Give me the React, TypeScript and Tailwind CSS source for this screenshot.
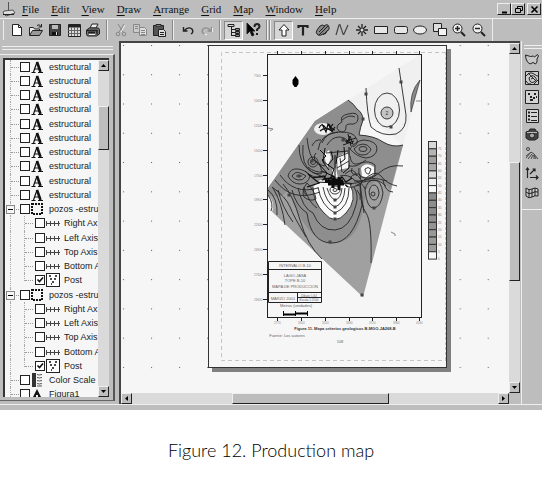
import React from 'react';

type TreeKind = 'text' | 'group' | 'axis' | 'post' | 'scale' | 'figure';

interface TreeRow {
    kind: TreeKind;
    label: string;
    child?: boolean;
    checked?: boolean;
}

const axisRows: TreeRow[] = [
    { kind: 'axis', label: 'Right Ax', child: true },
    { kind: 'axis', label: 'Left Axis', child: true },
    { kind: 'axis', label: 'Top Axis', child: true },
    { kind: 'axis', label: 'Bottom A', child: true },
    { kind: 'post', label: 'Post', child: true, checked: true },
];

const treeRows: TreeRow[] = [
    ...Array.from({ length: 10 }, (): TreeRow => ({ kind: 'text', label: 'estructural' })),
    { kind: 'group', label: 'pozos -estru' },
    ...axisRows,
    { kind: 'group', label: 'pozos -estru' },
    ...axisRows,
    { kind: 'scale', label: 'Color Scale' },
    { kind: 'figure', label: 'Figura1' },
];

const menus = ['File', 'Edit', 'View', 'Draw', 'Arrange', 'Grid', 'Map', 'Window', 'Help'];

const Icon: React.FC<{ children: React.ReactNode; color?: string }> = ({ children, color = '#222' }) => (
    <svg className="w-4 h-4 shrink-0" viewBox="0 0 16 16" fill="none" stroke={color} strokeWidth="1">
        {children}
    </svg>
);

const fileTools = [
    { name: 'New', icon: <Icon><path d="M3.5 2.5h6l3 3v8h-9z" fill="#fff" /><path d="M9.5 2.5v3h3" /></Icon> },
    { name: 'Open', icon: <Icon><path d="M1.5 13V5.500h4l1 1.500h5v2" fill="#eee" /><path d="M1.500 13.500l3-5h10l-3 5z" fill="#999" /><path d="M9 3.500q2-2 4 1M13.500 2v3h-3" /></Icon> },
    { name: 'Save', icon: <Icon><path d="M2.500 2.500h11v11h-11z" fill="#444" /><path d="M5 3h6v4H5z" fill="#bbb" stroke="none" /><path d="M5 10h6v3H5z" fill="#111" stroke="none" /><path d="M9.500 10v3" stroke="#ddd" /></Icon> },
    { name: 'Worksheet', icon: <Icon><path d="M2.500 2.500h12v12h-12z" fill="#ddd" /><path d="M3 4h11" strokeWidth="3" /><path d="M2 8.500h12M2 11.500h12M5.500 5v9M8.500 5v9M11.500 5v9" stroke="#666" /></Icon> },
    { name: 'Print', icon: <Icon><path d="M5 6l2-4h6l-2 4z" fill="#eee" /><path d="M1.500 8l3-2h9l1 2v4l-3 2h-9l-1-2z" fill="#777" /><path d="M2 8.500h10v4M3 10.500h7" strokeWidth="1.500" /><path d="M4 12.500h6" stroke="#eee" /></Icon> },
];

const editTools = [
    { name: 'Cut', icon: <Icon color="#888"><path d="M5 2l5 8M11 2L6 10" /><circle cx="5" cy="12" r="1.800" /><circle cx="11" cy="12" r="1.800" /><path d="M12 3L8 10" stroke="#eee" /></Icon> },
    { name: 'Copy', icon: <Icon color="#888"><path d="M1.500 2.500h6v8h-6zM3 4.500h3M3 6.500h3" fill="#ccc" /><path d="M7.500 5.500h5l2 2v6h-7z" fill="#ddd" /><path d="M9 8.500h4M9 10.500h4M9 12.500h4" /></Icon> },
    { name: 'Paste', icon: <Icon><path d="M2.500 3.500h10v10h-10z" fill="#555" /><path d="M5 4V2.500h5V4z" fill="#ddd" /><path d="M7.500 7.500h5l2 2v5h-7z" fill="#ddd" /><path d="M9 10.500h4M9 12.500h4" /></Icon> },
];

const undoTools = [
    { name: 'Undo', icon: <Icon><path d="M3.500 5v4h4M4 9q4-5 8-2q2 3-1 5" strokeWidth="1.400" /></Icon> },
    { name: 'Redo', icon: <Icon color="#8f8f8f"><path d="M12.500 5v4h-4M12 9q-4-5-8-2q-2 3 1 5" strokeWidth="1.400" /><path d="M6 12.500h2M13.500 6v4" stroke="#eee" /></Icon> },
];

const drawTools = [
    { name: 'Select', icon: <Icon><path d="M8 2.500l5 5.500h-3v6H6V8H3z" fill="#fff" /></Icon> },
    { name: 'Text', icon: <Icon><path d="M3.500 6V4h9v2M8 4v9.500" strokeWidth="2.200" /></Icon> },
    { name: 'Polygon', icon: <Icon><path d="M5 4q3-2 4 0q4-3 5 1q1 3-2 4q-1 4-4 3q-2 2-5 1q-3-2-1-5z" fill="#888" /><path d="M4 10l6-6M4 13L13 4M8 13l5-5" /></Icon> },
    { name: 'Polyline', icon: <Icon color="#444"><path d="M2 13L5 3q1-1 1 0l3 9q1 1 1 0l4-9" strokeWidth="1.200" /></Icon> },
    { name: 'Symbol', icon: <Icon><path d="M8 2v12M2 8h12M4 4l8 8M12 4l-8 8" strokeWidth="1.300" /><circle cx="8" cy="8" r="1.500" fill="#ddd" stroke="none" /></Icon> },
    { name: 'Rectangle', icon: <Icon><path d="M1.500 4.500h13v7h-13z" fill="#e6e6e6" /></Icon> },
    { name: 'Rounded rectangle', icon: <Icon><rect x="1.500" y="4.500" width="13" height="7" rx="2" fill="#e6e6e6" /></Icon> },
    { name: 'Ellipse', icon: <Icon><ellipse cx="8" cy="8" rx="6.500" ry="4" fill="#eee" /></Icon> },
    { name: 'Overlap', icon: <Icon><path d="M1.500 1.500h8v8h-8z" fill="#ddd" /><path d="M6.500 6.500h8v7h-8z" fill="#f4f4f4" /></Icon> },
    { name: 'Zoom in', icon: <Icon><circle cx="6.500" cy="6.500" r="4.500" fill="#eee" /><path d="M4 6.500h5M6.500 4v5" strokeWidth="1.500" /><path d="M10 10l4 4" strokeWidth="2" /></Icon> },
    { name: 'Zoom out', icon: <Icon><circle cx="6.500" cy="6.500" r="4.500" fill="#eee" /><path d="M4 6.500h5" strokeWidth="1.500" /><path d="M10 10l4 4" strokeWidth="2" /></Icon> },
];

const mapTools = [
    { name: 'Base map', icon: <Icon><path d="M1.500 4l5 1.500 3-.5 1 1 3-2.500 1 1.500-1.500 3v3l-1.500 2-2.500-1.500-3 1.500-2.500-2q-2-3-2-7z" fill="#c8c8c8" /></Icon> },
    { name: 'Contour map', icon: <Icon><path d="M1.500 1.500h13v13h-13z" fill="#ccc" /><path d="M2 6q4-5 8-2t4 2M2 11q2 4 5 3M5 8q3-4 6-1t-1 5-5-4zM7 9l2-1M10 14l4-4M4 3l9 9" /></Icon> },
    { name: 'Post map', icon: <Icon><path d="M1.500 1.500h13v13h-13z" fill="#d4d4d4" /><path d="M4 5h2M10 5h2M6 8h2M9 9h2M6 11h3M12 8h1" strokeWidth="1.800" /></Icon> },
    { name: 'Legend', icon: <Icon><path d="M2.500 1.500h12v13h-12z" fill="#d4d4d4" /><path d="M4 4.500h2M4 8h2M4 11.500h2" strokeWidth="2" /><path d="M7 4.500h6M7 8.500h6M7 12.500h6" /></Icon> },
    { name: 'Image map', icon: <Icon><path d="M2 5l3-1 1-2h5l1 2 2 1v6l-3 2H5l-3-2z" fill="#444" /><circle cx="8" cy="8.500" r="2.500" fill="#aaa" /><path d="M3 5.500h10" stroke="#bbb" /></Icon> },
    { name: 'Shaded relief', icon: <Icon color="#444"><circle cx="4" cy="3" r="1.500" /><path d="M2 12l5-6 3 2 4 5M4 13l4-5M7 13l2-4M10 13V9M12 13l-2-4M2 10l4-3" /></Icon> },
    { name: 'Vector map', icon: <Icon><path d="M3.500 13V3M2 5l1.500-2L5 5M6 9l5-5M8.500 4H11v2.500M6 12.500h8M12 10.500l2 2-2 2" strokeWidth="1.200" /></Icon> },
    { name: 'Wireframe', icon: <Icon><path d="M2 4q3 3 6 1t6 0v7q-3-1-6 1t-6-1zM2 8q3 3 6 1t6-1M5 5v8M8 5v8M11 4v8" fill="#ccc" /></Icon> },
];

const ToolButton: React.FC<{ name: string; pressed?: boolean; children: React.ReactNode }> = ({ name, pressed, children }) => (
    <button
        aria-label={name}
        title={name}
        className={`flex items-center justify-center shrink-0 w-[19px] h-[19px] ${pressed ? 'bg-[#d6d6d6] border-l border-t border-[#888] border-r border-b border-r-white border-b-white' : ''}`}
    >
        {children}
    </button>
);

const Separator = () => <span className="w-0.5 h-5 shrink-0 border-l border-[#888] border-r border-r-[#eee]" />;

const Arrow: React.FC<{ dir: 'up' | 'down' | 'left' | 'right' }> = ({ dir }) => {
    const paths = {
        up: 'M1 5h5L3.500 2z',
        down: 'M1 2h5L3.500 5z',
        left: 'M5 1v5L2 3.500z',
        right: 'M2 1v5l3-2.500z',
    };
    return (
        <button aria-label={`Scroll ${dir}`} className="flex items-center justify-center w-[11px] h-[11px] shrink-0 bg-[#bdbdbd] border border-t-[#eee] border-l-[#eee] border-r-[#222] border-b-[#222]">
            <svg className="w-[7px] h-[7px]" viewBox="0 0 7 7"><path d={paths[dir]} fill="#000" /></svg>
        </button>
    );
};

const RowIcon: React.FC<{ kind: TreeKind }> = ({ kind }) => {
    switch (kind) {
        case 'text':
            // serif capital drawn as the text-object glyph
            return (
                <svg className="w-[14px] h-[14px]" viewBox="0 0 14 14" fill="none" stroke="#111">
                    <path d="M7 2L3.500 12M4.500 9h5" strokeWidth="1.200" />
                    <path d="M7 2l3.500 10" strokeWidth="2.600" />
                    <path d="M1.500 12.500h4M8 12.500h5" />
                </svg>
            );
        case 'figure':
            return <svg className="w-[14px] h-[14px]" viewBox="0 0 14 14"><path d="M7 2l4 8-2 2H5l-2-2z" fill="#111" /><path d="M6 8h2v3H6z" fill="#eee" /></svg>;
        case 'group':
            return <svg className="w-[14px] h-[14px]" viewBox="0 0 14 14"><rect x="2" y="2" width="10" height="10" fill="none" stroke="#111" strokeWidth="2" strokeDasharray="2 1" /></svg>;
        case 'axis':
            return <svg className="w-[16px] h-[14px]" viewBox="0 0 16 14"><path d="M1 7.500h14M1.500 5v5M5.500 5v5M9.500 5v5M13.500 5v5" fill="none" stroke="#444" /></svg>;
        case 'post':
            return (
                <svg className="w-[16px] h-[14px]" viewBox="0 0 16 14">
                    <rect x="1.500" y="0.500" width="13" height="13" fill="#fff" stroke="#222" />
                    <path d="M4 3h2M10 3h2M5 6h2M9 6h2M7 9h2M6 11h1" stroke="#111" strokeWidth="1.500" />
                </svg>
            );
        case 'scale':
            return (
                <svg className="w-[14px] h-[14px]" viewBox="0 0 14 14">
                    <rect x="2" width="4" height="14" fill="#333" />
                    <path d="M7 1.500q2 1 5 0M7 4.500q2 1 5 0M7 7.500q2 1 5 0M7 10.500q2 1 5 0M7 13h5" fill="none" stroke="#555" />
                </svg>
            );
    }
};

const TreeItem: React.FC<{ row: TreeRow }> = ({ row }) => (
    <li className="flex items-start w-full h-[14px] nth-[4n]:h-[15px] last:h-[10px]! last:overflow-hidden shrink-0">
        <span className="relative w-[15px] self-stretch shrink-0">
            <span className="absolute left-[5px] top-0 h-full border-l border-dotted border-[#aaa]" />
            {!row.child && <span className="absolute left-[6px] top-[7px] w-2 border-t border-dotted border-[#999]" />}
            {row.kind === 'group' && (
                <button aria-label="Collapse" className="absolute left-[1px] top-[3px] w-[9px] h-[9px] flex items-center justify-center border border-[#888] bg-[#f6f6f6]">
                    <span className="w-[5px] h-px bg-black" />
                </button>
            )}
        </span>
        {row.child && (
            <span className="relative w-[15px] self-stretch shrink-0">
                <span className={`absolute left-[4px] top-0 border-l border-dotted border-[#aaa] ${row.kind === 'post' ? 'h-2' : 'h-full'}`} />
                <span className="absolute left-[5px] top-[7px] w-2 border-t border-dotted border-[#999]" />
            </span>
        )}
        <label className="flex items-center h-[14px]">
            <span className="relative w-[10px] h-[10px] shrink-0">
                <input type="checkbox" defaultChecked={row.checked} className="peer block appearance-none w-[10px] h-[10px] bg-white border border-[#222]" />
                <svg className="absolute inset-0 hidden peer-checked:block pointer-events-none" viewBox="0 0 10 10"><path d="M2.500 4.500l2 2 3.500-4" fill="none" stroke="#111" strokeWidth="1.600" /></svg>
            </span>
            <RowIcon kind={row.kind} />
            <span className={`whitespace-nowrap ${row.child ? 'ml-[3px]' : 'ml-[5px]'}`}>{row.label}</span>
        </label>
    </li>
);

const scaleColors = ['#d8d8d8', '#b4b4b4', '#a0a0a0', '#a8a8a8', '#d8d8d8', '#eee', '#f6f6f6', '#8c8c8c', '#8c8c8c', '#8c8c8c', '#909090', '#949494', '#989898', '#9c9c9c', '#9c9c9c', '#f6f6f6'];
const frameX = [277, 301, 325, 349, 372, 396, 419];
const frameY = [75, 100, 125, 150, 175, 199, 224, 249, 274, 299];
const markers = [[366, 94], [401, 82], [391, 127], [363, 119], [335, 200], [335, 207], [335, 213], [335, 219], [330, 242], [289, 195], [361, 198], [374, 208], [343, 140], [299, 176], [362, 295], [312, 161]];

// Contour map sheet: filled levels first, then isolines, well markers and annotation
const MapSheet = () => (
    <svg className="block w-full h-auto" viewBox="209 46 237 321" role="img" aria-label="Production contour map" fontFamily="'Liberation Sans', sans-serif">
        <path d="M446 52.500H221.500V360.500H446" fill="none" stroke="#c4c4c4" strokeDasharray="4 3" />
        <path d="M445.500 52v308" stroke="#c4c4c4" strokeDasharray="3 2" />
        <path d="M348 100L421 54V80L403 145Z" fill="#f0f0f0" />
        <path d="M268 188L315 121L348 100Q354 104 357 109Q363 113 363 120Q360 128 359 135Q375 136 383 142Q393 148 403 145L363 297L268 208Z" fill="#a0a0a0" />
        <path d="M268 188L315 121L348 100Q354 104 357 109Q363 113 363 120Q360 128 359 135Q375 136 383 142Q393 148 403 145L390 190Q380 172 366 190C362 230 352 243 332 243C312 243 297 215 288 190Q280 200 268 195Z" fill="#8e8e8e" />
        <path d="M420 80Q409 92 411 112Z" fill="#8b8b8b" stroke="#222" strokeWidth="0.600" />
        <path d="M268 195q8 8 4 17l-4-4z" fill="#f6f6f6" />
        <path d="M313 187L320 180L350 184Q358 200 346 213Q335 226 324 213Q313 200 313 187Z" fill="#fafafa" />
        <ellipse cx="323" cy="129" rx="9" ry="6" fill="#eee" />
        <path d="M361 168q5-7 13-1v7q-6 5-12 2z" fill="#fafafa" />
        <path d="M324 154l5-4 2 8-4 10zM337 157l10-5 3 6-2 10-10 2zM332 170l4-2 2 10-5-2z" fill="#f4f4f4" />
        <circle cx="387" cy="113" r="6" fill="#c4c4c4" />

        <g fill="none" stroke="#262626" strokeWidth="0.900">
            <path d="M366 88Q367 115 371 127Q382 137 396 134Q407 129 406 115L399 68" />
            <ellipse cx="387" cy="110" rx="12.500" ry="17" />
            <circle cx="387" cy="113" r="6" />
            <path d="M348 100Q354 104 357 109Q363 113 363 120Q360 128 359 135Q375 136 383 142Q393 148 403 145" />
            <path d="M339 131q-5-5 3-9q-3-6 6-8q11-3 10 5q-1 6-8 5q-5 0-4 4q-1 6-7 3zM342 120q7-6 13-3" />
            <path d="M322 143q4-11 18-11t16 6q4 5-3 9M327 145q5-8 12-8t10 6M318 150q2-16 20-18" />
            <path d="M350 149q5-8 14-9q13 1 13 9q-1 8-11 9q-9-1-16-9zM354 149q4-5 9-5t8 5q-2 6-8 6t-9-6z" />
            <ellipse cx="363" cy="149" rx="4" ry="2.500" />
            <path d="M307 138q2 20 9 24t5 12q-8 0-12-4q-10-7-10-25M303 145q-2 20 9 27q10 4 15 8" />
            <circle cx="313" cy="162" r="5" /><circle cx="313" cy="162" r="2.500" />
            <path d="M288 176q2-8 10-7t12 7q-2 8-10 8t-12-8zM292 176q3-5 8-3t6 3q-3 5-8 4t-6-4zM296 176h6" />
            <path d="M280 175Q294 195 318 188M275 180Q292 203 320 192M272 187Q286 197 290 207T306 237M283 184Q293 195 300 220T322 259M278 190Q282 207 293 222" />
            <path d="M268 190q10 8 9 25M268 195q6 9 3 16M273 188Q282 203 285 225M292 190Q296 206 307 213Q311 243 332 243T362 205Q362 195 360 183" />
            <path d="M298 188Q303 209 313 213Q320 231 335 230T356 205Q359 195 354 187M304 188q6 16 13 20" />
            <path d="M313 187Q313 202 324 213Q335 226 346 213Q358 200 350 184M318 187q3 19 17 26q14-6 14-25M323 187q3 16 12 20q9-3 10-19M327 188q3 10 8 12q6-1 7-12" />
            <ellipse cx="335" cy="190" rx="5" ry="4" /><ellipse cx="335" cy="190" rx="2" ry="1.500" />
            <path d="M307 183q-6 8-3 14q6 5 12 2q-1-8-9-16zM304 187q-1 7 3 8" />
            <path d="M365 190q2-10 9-10t9 13q-2 14-9 15t-9-18zM369 192q1-7 5-7t5 8q-1 7-5 7t-5-8z" />
            <circle cx="373" cy="194" r="2" />
            <path d="M360 183Q360 205 366 213T371 263M357 190q6 9 7 23M403 166q-14-2-24 7t-25 8M397 186q-10-2-16-10t-19 6M393 192q-8 0-10-12M349 166q8 1 12-3q8-3 14 2v10q-7 5-13 2q-4 0-3-9M365 169q3-3 6 0l-2 5q-4 0-4-5M350 178q5-7 10 0t-4 8" />
            <path d="M340 176q8-2 13 3t15 2 18 5M342 181q10 5 20 0t25 0M345 174q9-8 12 2" />
            <path d="M308 167q7 6 16 5M305 171q8 8 18 6M316 153q-4 5 1 9t8 4M350 156q1 9 7 8t9-4M352 168q-2 7 4 6t4 5M312 146q3-7 9-6M346 186q6 3 11-1t8 4" />
        </g>

        <g fill="none" stroke="#0c0c0c" strokeWidth="1.200">
            <path d="M319 128q3-6 6-1t8-3M322 124l4 8 2-8 4 7 3-4M320 131q6-5 13 1M329 124q3 6 6 6" />
            <path d="M343 138l4 5 3-7 3 8-7-3 10-3M348 134l3 12M343 145l11-4" strokeWidth="0.900" />
            <path d="M320 150l6 6-4 4 7 6M325 148l-2 14 6 8M331 151l2 8-5 6 6 4-3 8M335 155v25M338 150l-2 14M344 147l1 12-5 4M349 147v21l-6 5M319 164l8 9-3 6M322 171l13 6" strokeWidth="1" />
            <path d="M336 158l12-5M326 153l22-2M337 168l12-7M340 158l2 14" strokeWidth="0.800" />
            <path d="M312 178l12-2 3 5 6-5 4 7 5-6 4 5 6-4M318 182l34 2M322 180q12-6 26 7M308 174l11 9-12 4" />
            <path d="M325 181h18M328 184h16M333 178v10M339 177v13" strokeWidth="3" />
        </g>

        {markers.map(([x, y]) => (
            <rect key={`${x}-${y}`} x={x - 1.5} y={y - 1.5} width="3" height="3" fill="#444" />
        ))}
        <text x="385.500" y="115" fontSize="5" fill="#333">2</text>
        <path d="M295.500 76l3 4v4l-2 3h-2l-2-3v-4z" fill="#000" />

        <rect x="267.500" y="54.500" width="154" height="263" fill="none" stroke="#222" />
        {frameX.map((x) => (
            <g key={x}>
                <path d={`M${x + 0.5} 51v3M${x + 0.5} 318v3`} stroke="#222" />
                <text x={x - 3} y="324" fontSize="3" fill="#888">{x * 10}</text>
            </g>
        ))}
        {frameY.map((y) => (
            <g key={y}>
                <path d={`M263 ${y + 0.5}h4`} stroke="#222" />
                <text x="254" y={y + 1.5} fontSize="3" fill="#888">{y * 100}</text>
            </g>
        ))}
        <path d="M268 128l5 1-3 2M391 232l4 2v2M416 101h5" fill="none" stroke="#888" />

        <path d="M268.500 261.500h53v41h-53zM268 269.500h53M268 292.500h53M297.500 292v10M297 297.500h24" fill="#f6f6f6" stroke="#222" />
        <g fill="#666" textAnchor="middle">
            <text x="295" y="267" fontSize="4">INTERVALO B-10</text>
            <text x="295" y="277" fontSize="4">LAGO-JASA</text>
            <text x="295" y="282" fontSize="4">TOPE B-10</text>
            <text x="295" y="287.500" fontSize="4">MAPA DE PRODUCCION</text>
            <text x="283" y="299.500" fontSize="4">MARZO 2001</text>
            <text x="309" y="296.500" fontSize="3">Dibujo: LGJ</text>
            <text x="309" y="301" fontSize="3">Escala 1:2500</text>
            <text x="296" y="307" fontSize="4">Metros (unidades)</text>
            <text x="345" y="329.500" fontSize="4" fontWeight="bold" fill="#333">Figura 11. Mapa criterios geologicos B-MGO-JA268-B</text>
            <text x="287" y="336.500" fontSize="4">Fuente: Los autores</text>
            <text x="340" y="342.500" fontSize="4">108</text>
        </g>
        <path d="M283 314.500h12M295 313.500h13" stroke="#000" strokeWidth="2" />
        <path d="M283.500 311v5M295.500 311v5M307.500 311v5" stroke="#000" />

        {scaleColors.map((color, i) => (
            <g key={i}>
                <rect x="428.500" y={141.5 + i * 7.35} width="8" height="7.350" fill={color} stroke="#333" />
                <text x="438" y={150 + i * 7.35} fontSize="3" fill="#777">{75 - i * 5}</text>
            </g>
        ))}
    </svg>
);

const MenuBar = () => (
    <header className="flex items-center h-[18px] pl-0.5 pr-px">
        <svg className="w-[14px] h-[16px] mr-[6px]" viewBox="0 0 14 16" fill="none" stroke="#555">
            <path d="M6.500 1v9M2 10l9-1 2 3-9 3-3-3z" fill="#ddd" />
            <path d="M1 13.500h11" stroke="#222" />
        </svg>
        <nav className="flex gap-3 font-['Liberation_Serif',serif] text-[11px] leading-4 text-[#111] [text-shadow:0_0_1px_#555]">
            {menus.map((menu) => (
                <button key={menu}><span className="underline underline-offset-2">{menu[0]}</span>{menu.slice(1)}</button>
            ))}
        </nav>
        <div className="ml-auto flex">
            {[
                { name: 'Minimize', d: 'M3 8.500h5', w: 2 },
                { name: 'Restore', d: 'M4.500 4V2.500h5v4H8M2.500 4.500h5v4h-5z', w: 1 },
                { name: 'Close', d: 'M2.500 2.500l6 6M8.500 2.500l-6 6', w: 1.6 },
            ].map((b) => (
                <button key={b.name} aria-label={b.name} className={`w-[14px] h-[12px] flex items-center justify-center border border-t-[#eee] border-l-[#eee] border-r-[#222] border-b-[#222] ${b.name === 'Close' ? 'ml-[2px]' : ''}`}>
                    <svg className="w-[11px] h-[11px]" viewBox="0 0 11 11"><path d={b.d} fill="none" stroke="#000" strokeWidth={b.w} /></svg>
                </button>
            ))}
        </div>
    </header>
);

const Toolbar = () => (
    <div className="flex items-center h-[23px] border-t border-[#eee]">
        <span className="w-px h-5 ml-[3px] mr-[3px] bg-[#eee]" />
        {fileTools.map((t) => <ToolButton key={t.name} name={t.name}>{t.icon}</ToolButton>)}
        <span className="flex pl-1 pr-[3px]"><Separator /></span>
        {editTools.map((t) => <ToolButton key={t.name} name={t.name}>{t.icon}</ToolButton>)}
        <span className="flex px-1"><Separator /></span>
        {undoTools.map((t) => <ToolButton key={t.name} name={t.name}>{t.icon}</ToolButton>)}
        <span className="flex px-[3px]"><Separator /></span>
        <ToolButton name="Object manager" pressed>
            <Icon><path d="M2 2.500h6v2H2zM5.500 5v9M5.500 7.500H9M5.500 10.500H9M5.500 13.500H9" /><path d="M9.500 6.500h4v2h-4zM9.500 9.500h4v2h-4zM9.500 12.500h4v2h-4z" fill="#888" /></Icon>
        </ToolButton>
        <ToolButton name="Context help">
            <Icon><path d="M2 1v11l3-3 2 5 2-1-2-4h3z" fill="#000" /><path d="M9.500 5q0-3 2.500-3t2.500 2.500q0 1.500-2.500 3V9M12 11v2" strokeWidth="2" /></Icon>
        </ToolButton>
        <span className="flex gap-px pl-1 pr-[3px]"><Separator /><Separator /></span>
        <div className="flex justify-between w-[214px]">
            {drawTools.map((t, i) => <ToolButton key={t.name} name={t.name} pressed={i === 0}>{t.icon}</ToolButton>)}
        </div>
        <span className="w-px h-full ml-1 bg-[#eee]" />
    </div>
);

const ObjectManager = () => (
    <aside className="flex flex-col w-[119px] shrink-0 pt-[5px] pb-[3px] pr-[4px]">
        <div className="h-1 mx-0.5 border-y border-[#eee]" />
        <div className="flex flex-1 min-h-0 mt-1 pt-[3px] pb-[3px] pl-[3px] pr-[4px] border-t border-[#eee] border-r-2 border-r-[#555] border-b border-b-[#666]">
            <div className="flex flex-1 min-w-0 border-t-2 border-l-2 border-[#333] bg-[#f6f6f6]">
                <ul className="flex flex-col flex-1 min-w-0 font-['Liberation_Sans',sans-serif] text-[9px] leading-[14px] text-[#222]">
                    {treeRows.map((row, i) => <TreeItem key={i} row={row} />)}
                </ul>
                <div className="flex flex-col w-[11px] shrink-0 bg-[#dadada]">
                    <Arrow dir="up" />
                    <div className="flex-[35]" />
                    <div className="flex-[43] bg-[#bdbdbd] border border-t-[#eee] border-l-[#eee] border-r-[#222] border-b-[#222]" />
                    <div className="flex-[238]" />
                    <Arrow dir="down" />
                </div>
            </div>
        </div>
    </aside>
);

const PlotWindow = () => (
    <main className="flex flex-col flex-1 min-w-0 border-t-2 border-l-2 border-[#444]">
        <div className="flex flex-1 min-h-0">
            <div className="relative flex-1 min-w-0 pt-0.5 pb-6 pl-[87px] bg-[#f6f6f6] overflow-hidden">
                <svg className="absolute inset-0 w-full h-full" aria-hidden="true">
                    <defs>
                        <pattern id="grid" width="28.060" height="29.270" patternUnits="userSpaceOnUse">
                            <rect x="2" y="2" width="1" height="1" fill="#555" />
                        </pattern>
                    </defs>
                    <rect width="100%" height="100%" fill="url(#grid)" />
                </svg>
                <div className="relative w-[239px] bg-[#f6f6f6] border border-[#333] shadow-[4px_4px_0_#808080]">
                    <MapSheet />
                </div>
            </div>
            <div className="flex flex-col w-[11px] shrink-0 bg-[#dadada]">
                <Arrow dir="up" />
                <div className="flex-[108]" />
                <div className="flex-[118] bg-[#bdbdbd] border border-t-[#eee] border-l-[#eee] border-r-[#222] border-b-[#222]" />
                <div className="flex-[101]" />
                <Arrow dir="down" />
            </div>
        </div>
        <div className="flex h-[11px] shrink-0 bg-[#dadada]">
            <Arrow dir="left" />
            <div className="flex-[101]" />
            <div className="flex-[156] bg-[#bdbdbd] border border-t-[#eee] border-l-[#eee] border-r-[#222] border-b-[#222]" />
            <div className="flex-[110]" />
            <Arrow dir="right" />
            <span className="w-[11px] bg-[#bdbdbd]" />
        </div>
    </main>
);

const App: React.FC = () => (
    <div className="min-h-screen bg-white">
        <section className="flex flex-col bg-[#bdbdbd]">
            <MenuBar />
            <Toolbar />
            <div className="flex">
                <ObjectManager />
                <PlotWindow />
                <aside className="flex flex-col w-[21px] shrink-0 ml-px pt-1 border-l border-[#eee]">
                    <div className="h-1 shrink-0 ml-0.5 border-y border-[#eee]" />
                    <div className="flex flex-col items-center pb-2 border-b border-[#eee]">
                        {mapTools.map((t) => <ToolButton key={t.name} name={t.name}>{t.icon}</ToolButton>)}
                    </div>
                </aside>
            </div>
            <div className="h-1.5 border-t border-[#eee] bg-[#bdbdbd]" />
        </section>
        <p className="pt-[26px] pb-3 text-center font-['Lato',sans-serif] font-light text-[18px] leading-7 text-black">Figure 12. Production map</p>
    </div>
);

export default App;
